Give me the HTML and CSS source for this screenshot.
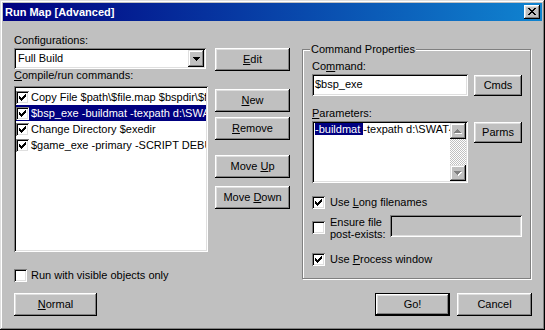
FILE: index.html
```html
<!DOCTYPE html>
<html lang="en">
<head>
	<meta charset="UTF-8">
	<title>Run Map [Advanced]</title>
	<link rel="stylesheet" href="styles.css">
</head>
<body>
	<div class="window">
		<div class="titlebar">
			<span class="title">Run Map [Advanced]</span>
			<span class="close-btn"><svg width="8" height="7" viewBox="0 0 8 7"><path d="M0 0h2v1H0zM6 0h2v1H6zM1 1h2v1H1zM5 1h2v1H5zM2 2h4v1H2zM3 3h2v1H3zM2 4h4v1H2zM1 5h2v1H1zM5 5h2v1H5zM0 6h2v1H0zM6 6h2v1H6z"/></svg></span>
		</div>
		<div class="main">
			<div class="col-left">
				<div class="lbl">Configurations:</div>
				<div class="combo">
					<span class="combo-value">Full Build</span>
					<span class="combo-btn"><svg width="7" height="4" viewBox="0 0 7 4"><path d="M0 0H7V1H6V2H5V3H4V4H3V3H2V2H1V1H0Z"/></svg></span>
				</div>
				<div class="lbl"><u>C</u>ompile/run commands:</div>
				<div class="listbox">
					<div class="list-item">
						<span class="chk"><svg width="7" height="7" viewBox="0 0 7 7"><path d="M0 2h1v3H0zM1 3h1v3H1zM2 4h1v3H2zM3 3h1v3H3zM4 2h1v3H4zM5 1h1v3H5zM6 0h1v3H6z"/></svg></span>
						<span class="item-text">Copy File $path\$file.map $bspdir\$file.map</span>
					</div>
					<div class="list-item selected">
						<span class="chk"><svg width="7" height="7" viewBox="0 0 7 7"><path d="M0 2h1v3H0zM1 3h1v3H1zM2 4h1v3H2zM3 3h1v3H3zM4 2h1v3H4zM5 1h1v3H5zM6 0h1v3H6z"/></svg></span>
						<span class="item-text">$bsp_exe -buildmat -texpath d:\SWAT4</span>
					</div>
					<div class="list-item">
						<span class="chk"><svg width="7" height="7" viewBox="0 0 7 7"><path d="M0 2h1v3H0zM1 3h1v3H1zM2 4h1v3H2zM3 3h1v3H3zM4 2h1v3H4zM5 1h1v3H5zM6 0h1v3H6z"/></svg></span>
						<span class="item-text">Change Directory $exedir</span>
					</div>
					<div class="list-item">
						<span class="chk"><svg width="7" height="7" viewBox="0 0 7 7"><path d="M0 2h1v3H0zM1 3h1v3H1zM2 4h1v3H2zM3 3h1v3H3zM4 2h1v3H4zM5 1h1v3H5zM6 0h1v3H6z"/></svg></span>
						<span class="item-text">$game_exe -primary -SCRIPT DEBUG</span>
					</div>
				</div>
				<div class="check-row visible-only">
					<span class="chk"></span>
					<span>Run with visible objects only</span>
				</div>
			</div>
			<div class="col-buttons">
				<button class="btn"><u>E</u>dit</button>
				<button class="btn btn-new"><u>N</u>ew</button>
				<button class="btn btn-remove"><u>R</u>emove</button>
				<button class="btn btn-up">Move <u>U</u>p</button>
				<button class="btn btn-down">Move <u>D</u>own</button>
			</div>
			<div class="group">
				<span class="group-title">Command Properties</span>
				<div class="lbl field-label">Co<u>m</u>mand:</div>
				<div class="field-row">
					<div class="edit">$bsp_exe</div>
					<button class="btn btn-small">Cmds</button>
				</div>
				<div class="lbl params-label"><u>P</u>arameters:</div>
				<div class="field-row">
					<div class="memo">
						<div class="memo-text"><span class="sel">-buildmat </span>-texpath d:\SWAT4</div>
						<div class="scrollbar">
							<span class="scroll-btn"><svg width="8" height="5" viewBox="0 0 8 5"><path fill="#fff" d="M4 1H5V2H6V3H7V4H8V5H1V4H2V3H3V2H4Z"/><path fill="#808080" d="M3 0H4V1H5V2H6V3H7V4H0V3H1V2H2V1H3Z"/></svg></span>
							<span class="scroll-track"></span>
							<span class="scroll-btn"><svg width="8" height="5" viewBox="0 0 8 5"><path fill="#fff" d="M1 1H8V2H7V3H6V4H5V5H4V4H3V3H2V2H1Z"/><path fill="#808080" d="M0 0H7V1H6V2H5V3H4V4H3V3H2V2H1V1H0Z"/></svg></span>
						</div>
					</div>
					<button class="btn btn-small">Parms</button>
				</div>
				<div class="check-row opt-long">
					<span class="chk"><svg width="7" height="7" viewBox="0 0 7 7"><path d="M0 2h1v3H0zM1 3h1v3H1zM2 4h1v3H2zM3 3h1v3H3zM4 2h1v3H4zM5 1h1v3H5zM6 0h1v3H6z"/></svg></span>
					<span>Use <u>L</u>ong filenames</span>
				</div>
				<div class="opt-ensure">
					<span class="chk"></span>
					<span class="ensure-text">Ensure file post-exists:</span>
					<div class="edit edit-disabled"></div>
				</div>
				<div class="check-row opt-process">
					<span class="chk"><svg width="7" height="7" viewBox="0 0 7 7"><path d="M0 2h1v3H0zM1 3h1v3H1zM2 4h1v3H2zM3 3h1v3H3zM4 2h1v3H4zM5 1h1v3H5zM6 0h1v3H6z"/></svg></span>
					<span>Use <u>P</u>rocess window</span>
				</div>
			</div>
		</div>
		<div class="footer">
			<button class="btn btn-normal"><u>N</u>ormal</button>
			<button class="btn btn-default btn-go">Go!</button>
			<button class="btn btn-cancel">Cancel</button>
		</div>
	</div>
</body>
</html>
```

FILE: styles.css
```css
html, body {
	margin: 0;
	background: #c0c0c0;
}
body {
	font-family: "Liberation Sans", Arial, sans-serif;
	font-size: 11px;
	line-height: 13px;
	color: #000;
}
.window {
	width: 545px;
	height: 330px;
	box-sizing: border-box;
	padding: 3px;
	background: #c0c0c0;
	box-shadow: inset -1px -1px #000, inset 1px 1px #dfdfdf, inset -2px -2px #808080, inset 2px 2px #fff;
}
.titlebar {
	height: 18px;
	display: flex;
	align-items: center;
	background: linear-gradient(to right, #000080, #1084d0);
	color: #fff;
}
.title {
	flex: 1;
	padding-left: 2px;
	font-weight: bold;
	line-height: 18px;
}
.close-btn {
	width: 16px;
	height: 14px;
	margin-right: 2px;
	box-sizing: border-box;
	padding: 3px 0 0 4px;
	background: #c0c0c0;
	box-shadow: inset -1px -1px #000, inset 1px 1px #fff, inset -2px -2px #808080, inset 2px 2px #dfdfdf;
}
.close-btn svg, .chk svg {
	display: block;
}

/* main area */
.main {
	display: flex;
	align-items: flex-start;
	padding-left: 11px;
	height: 261px;
}
.col-left {
	width: 194px;
	padding-top: 13px;
}
.lbl {
	line-height: 13px;
	white-space: nowrap;
}
.combo {
	margin-top: 1px;
	width: 192px;
	height: 21px;
	box-sizing: border-box;
	padding: 2px;
	display: flex;
	background: #fff;
	box-shadow: inset 1px 1px #808080, inset -1px -1px #fff, inset 2px 2px #000, inset -2px -2px #dfdfdf;
}
.combo-value {
	flex: 1;
	padding-left: 2px;
	line-height: 17px;
}
.combo-btn {
	width: 16px;
	height: 17px;
	display: flex;
	align-items: center;
	justify-content: center;
	background: #c0c0c0;
	box-shadow: inset -1px -1px #000, inset 1px 1px #dfdfdf, inset -2px -2px #808080, inset 2px 2px #fff;
}
.listbox {
	margin-top: 4px;
	height: 166px;
	box-sizing: border-box;
	padding: 3px 2px 2px;
	background: #fff;
	overflow: hidden;
	box-shadow: inset 1px 1px #808080, inset -1px -1px #fff, inset 2px 2px #000, inset -2px -2px #dfdfdf;
}
.list-item {
	display: flex;
	align-items: center;
	height: 16px;
	line-height: 16px;
	white-space: nowrap;
	overflow: hidden;
}
.list-item .chk {
	margin-right: 2px;
}
.list-item.selected {
	background: #000080;
	color: #fff;
}
.chk {
	flex: none;
	width: 13px;
	height: 13px;
	box-sizing: border-box;
	padding: 3px;
	background: #fff;
	box-shadow: inset 1px 1px #808080, inset -1px -1px #fff, inset 2px 2px #000, inset -2px -2px #dfdfdf;
}
.check-row {
	display: flex;
	align-items: center;
	gap: 5px;
	height: 13px;
	white-space: nowrap;
}
.visible-only {
	margin-top: 17px;
	gap: 4px;
}

/* buttons */
.btn {
	appearance: none;
	margin: 0;
	padding: 0;
	border: 0;
	font: inherit;
	color: #000;
	background: #c0c0c0;
	height: 23px;
	box-sizing: border-box;
	box-shadow: inset -1px -1px #000, inset 1px 1px #fff, inset -2px -2px #808080, inset 2px 2px #dfdfdf;
}
.btn-default {
	border: 1px solid #000;
}
.col-buttons {
	width: 75px;
	margin-left: 7px;
	padding-top: 27px;
	display: flex;
	flex-direction: column;
}
.btn-new { margin-top: 18px; }
.btn-remove { margin-top: 5px; }
.btn-up { margin-top: 15px; }
.btn-down { margin-top: 8px; }

/* command properties */
.group {
	width: 229px;
	height: 230px;
	margin-left: 12px;
	margin-top: 28px;
	box-sizing: border-box;
	padding: 0 7px 0 9px;
	border: 1px solid #808080;
	box-shadow: inset 1px 1px #fff, 1px 1px #fff;
}
.group-title {
	display: block;
	width: fit-content;
	margin: -7px 0 0 -2px;
	padding: 0 1px;
	background: #c0c0c0;
	line-height: 13px;
}
.field-label {
	margin-top: 4px;
}
.params-label {
	margin-top: 11px;
}
.field-row {
	display: flex;
	align-items: flex-start;
	gap: 6px;
	margin-top: 1px;
}
.edit {
	width: 156px;
	height: 22px;
	box-sizing: border-box;
	padding: 2px 3px;
	line-height: 16px;
	white-space: nowrap;
	overflow: hidden;
	background: #fff;
	box-shadow: inset 1px 1px #808080, inset -1px -1px #fff, inset 2px 2px #000, inset -2px -2px #dfdfdf;
}
.btn-small {
	width: 48px;
	height: 21px;
	margin-top: 1px;
}
.memo {
	width: 156px;
	height: 62px;
	box-sizing: border-box;
	padding: 2px;
	display: flex;
	background: #fff;
	box-shadow: inset 1px 1px #808080, inset -1px -1px #fff, inset 2px 2px #000, inset -2px -2px #dfdfdf;
}
.memo-text {
	flex: 1;
	padding-left: 1px;
	white-space: nowrap;
	overflow: hidden;
	line-height: 13px;
}
.sel {
	background: #000080;
	color: #fff;
}
.scrollbar {
	width: 16px;
	display: flex;
	flex-direction: column;
	background: repeating-conic-gradient(#c0c0c0 0 25%, #fff 0 50%) 0 0 / 2px 2px;
}
.scroll-btn {
	height: 16px;
	display: flex;
	align-items: center;
	justify-content: center;
	background: #c0c0c0;
	box-shadow: inset -1px -1px #000, inset 1px 1px #dfdfdf, inset -2px -2px #808080, inset 2px 2px #fff;
}
.scroll-btn svg {
	display: block;
}
.scroll-track {
	flex: 1;
}
.opt-long {
	margin-top: 13px;
}
.opt-ensure {
	display: flex;
	align-items: flex-start;
	height: 22px;
	margin-top: 6px;
}
.opt-ensure .chk {
	margin-top: 6px;
}
.ensure-text {
	width: 60px;
	margin: 1px 0 0 5px;
	line-height: 12px;
}
.edit-disabled {
	width: 132px;
	background: #c0c0c0;
}
.opt-process {
	margin-top: 16px;
}

/* bottom row */
.footer {
	display: flex;
	margin-top: 11px;
	padding: 0 10px 0 11px;
}
.btn-normal {
	width: 83px;
}
.btn-go {
	width: 75px;
	margin-left: auto;
}
.btn-cancel {
	width: 75px;
	margin-left: 7px;
}
```
